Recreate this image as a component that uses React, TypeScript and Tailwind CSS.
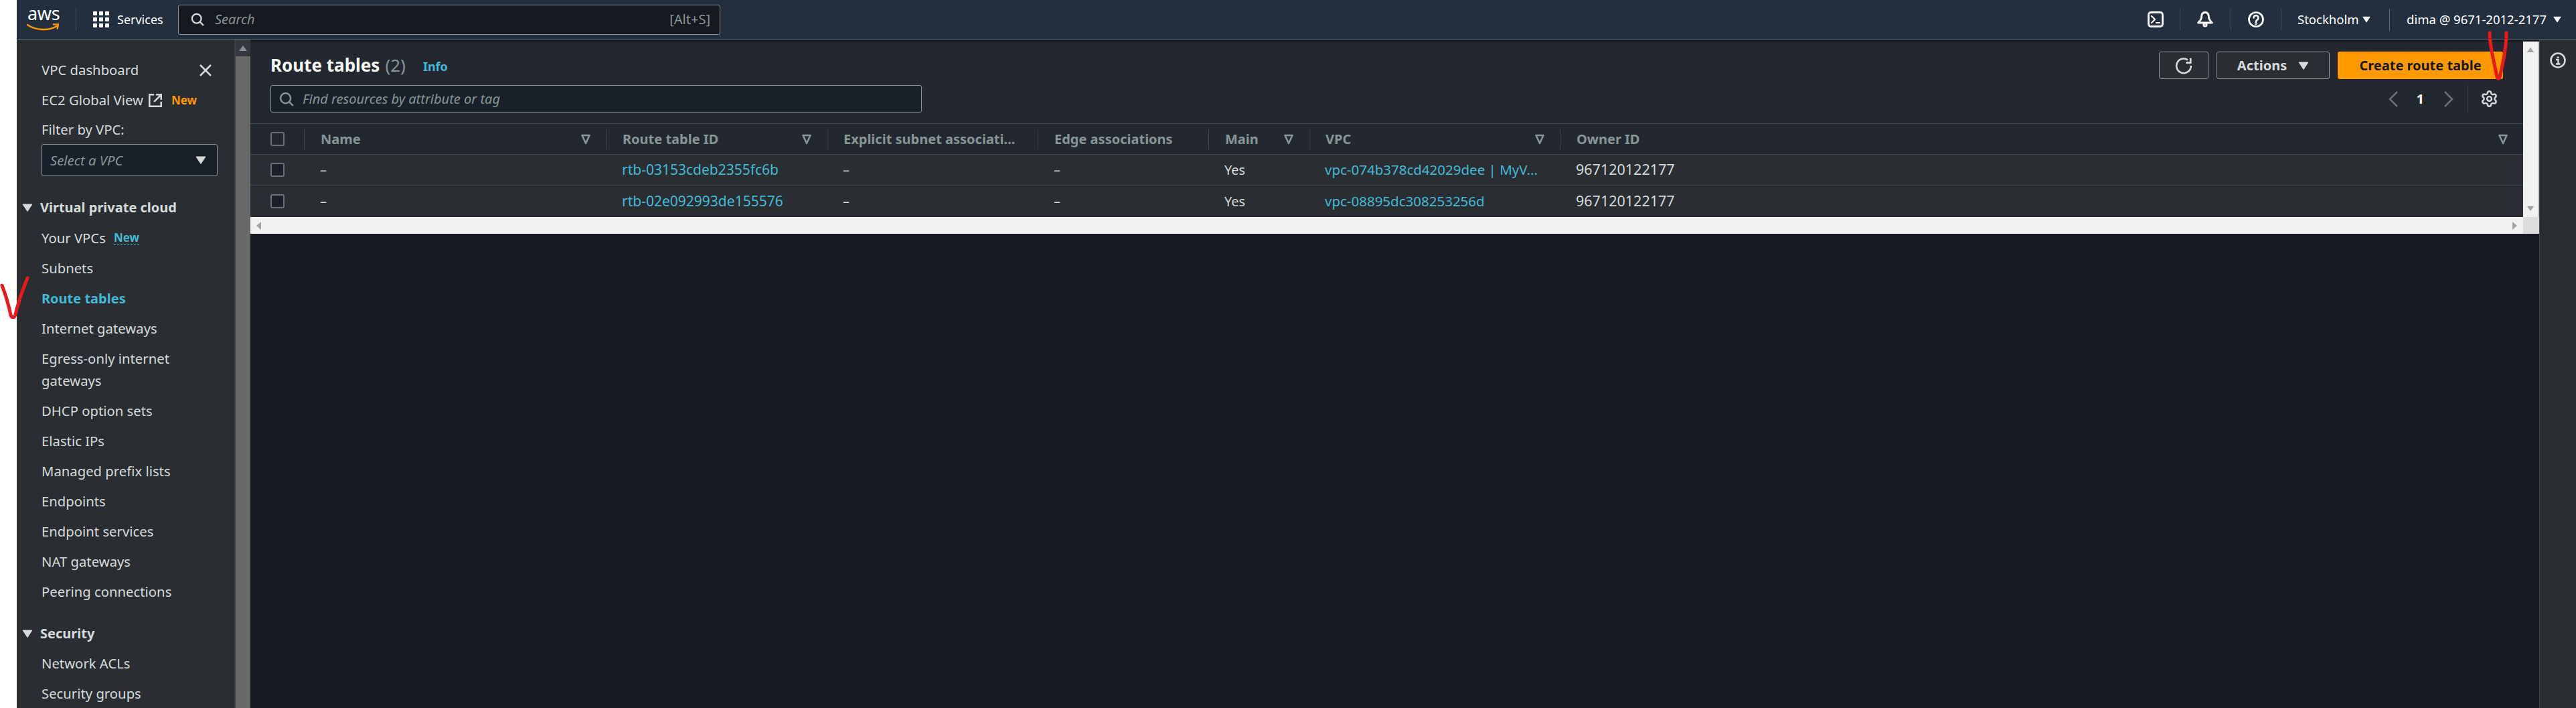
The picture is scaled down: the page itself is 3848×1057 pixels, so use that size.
import { Settings } from "lucide-react";

const font = "font-['Noto_Sans','Open_Sans',sans-serif]";

function Tri({ className }: { className: string }) {
  return (
    <svg viewBox="0 0 16 12" className={className}>
      <path d="M1 1h14L8 11.5z" fill="currentColor" stroke="currentColor" strokeLinejoin="round" />
    </svg>
  );
}

function FilterIcon() {
  return (
    <svg viewBox="0 0 14 16" className="h-[16px] w-[14px] shrink-0 text-[#879596]">
      <path d="M1.5 2h11L7 14z" fill="none" stroke="currentColor" strokeWidth="2.6" strokeLinejoin="round" />
    </svg>
  );
}

function SearchIcon({ className }: { className: string }) {
  return (
    <svg viewBox="0 0 24 24" className={className} fill="none" stroke="currentColor" strokeWidth="2.7" strokeLinecap="round">
      <circle cx="10.5" cy="10.5" r="8.2" />
      <path d="M16.5 16.5 22 22" />
    </svg>
  );
}

function NavItem({ label, active, badge }: { label: string; active?: boolean; badge?: boolean }) {
  return (
    <div className={`flex h-[45px] items-center ${active ? "text-[20px] font-bold text-[#44b9d6]" : "text-[#d5dbdb]"}`}>
      <span>{label}</span>
      {badge && (
        <span className="ml-[12px] border-b border-dashed border-[#44b9d6] text-[17px] leading-[20px] font-bold text-[#44b9d6]">
          New
        </span>
      )}
    </div>
  );
}

function Section({ label, className }: { label: string; className: string }) {
  return (
    <div className={`-ml-[29px] flex h-[45px] items-center gap-[11px] text-[20px] font-bold text-[#d5dbdb] ${className}`}>
      <Tri className="h-[12px] w-[16px] shrink-0" />
      <span>{label}</span>
    </div>
  );
}

const cols = "grid grid-cols-[80px_451px_330px_315px_255px_150px_375px_1fr]";

function Head({ label, filter = true }: { label: string; filter?: boolean }) {
  return (
    <div className="flex items-center">
      <div className="flex h-[30px] flex-1 items-center justify-between border-l border-[#414750] pr-[23px] pl-[24px]">
        <span className="whitespace-nowrap">{label}</span>
        {filter && <FilterIcon />}
      </div>
    </div>
  );
}

function Row({ id, vpc, className }: { id: string; vpc: string; className: string }) {
  const cell = "flex items-center pl-[24px] whitespace-nowrap";
  return (
    <div className={`${cols} border-t border-[#414750] bg-[#2a2e33] text-[#d5dbdb] ${className}`}>
      <div className="flex items-center pl-[30px]">
        <div className="h-[21px] w-[21px] rounded-[3px] border-2 border-[#687078] bg-[#1a2029]" />
      </div>
      <div className={cell}>–</div>
      <div className={`${cell} text-[21px] text-[#44b9d6]`}>{id}</div>
      <div className={cell}>–</div>
      <div className={cell}>–</div>
      <div className={cell}>Yes</div>
      <div className={`${cell} text-[20.500px] text-[#44b9d6]`}>{vpc}</div>
      <div className={`${cell} text-[21.500px]`}>967120122177</div>
    </div>
  );
}

export default function App() {
  return (
    <div className={`flex h-[1057px] w-[3848px] overflow-hidden bg-white text-[20px] ${font}`}>
      <div className="w-[25px] shrink-0 bg-white" />
      <div className="flex min-w-0 flex-1 flex-col">
        <header className="flex h-[59px] shrink-0 items-center border-b border-[#5f6b7a] bg-[#232f3e] text-[18.500px] text-white">
          <div className="relative ml-[15px] flex h-[44px] w-[58px] flex-col items-start">
            <span className="-mt-[5px] ml-[1px] text-[27px] leading-[36px] tracking-[-0.3px]">aws</span>
            <svg viewBox="0 0 48 12" className="-mt-[3px] h-[12px] w-[48px]">
              <path d="M1 2c13 9 32 9 44 2" fill="none" stroke="#ff9900" strokeWidth="2.6" strokeLinecap="round" />
              <path d="M39 1.5h8l-1.5 7" fill="none" stroke="#ff9900" strokeWidth="2.4" />
            </svg>
          </div>
          <div className="ml-[15px] h-[33px] w-px bg-[#414d5c]" />
          <svg viewBox="0 0 24 24" className="ml-[25px] h-[24px] w-[24px] text-white" fill="currentColor">
            <rect x="0" y="0" width="6" height="6" rx="1" />
            <rect x="9" y="0" width="6" height="6" rx="1" />
            <rect x="18" y="0" width="6" height="6" rx="1" />
            <rect x="0" y="9" width="6" height="6" rx="1" />
            <rect x="9" y="9" width="6" height="6" rx="1" />
            <rect x="18" y="9" width="6" height="6" rx="1" />
            <rect x="0" y="18" width="6" height="6" rx="1" />
            <rect x="9" y="18" width="6" height="6" rx="1" />
            <rect x="18" y="18" width="6" height="6" rx="1" />
          </svg>
          <span className="ml-[12px] w-[91px] text-[18px]">Services</span>
          <div className="flex h-[45px] w-[810px] items-center rounded-[3px] border border-[#879596] bg-[#16191f] pr-[14px] pl-[18px] text-[20px]">
            <SearchIcon className="h-[20px] w-[20px] text-[#d5dbdb]" />
            <span className="ml-[16px] text-[#879596] italic">Search</span>
            <span className="ml-auto text-[#879596]">[Alt+S]</span>
          </div>
          <div className="ml-auto flex h-full items-center">
            <svg viewBox="0 0 24 24" className="h-[24px] w-[24px]" fill="none" stroke="currentColor" strokeWidth="2.8" strokeLinecap="round" strokeLinejoin="round">
              <rect x="1.5" y="1.5" width="21" height="21" rx="3.5" />
              <path d="M6 7l5 5-5 5M13 17h5" strokeWidth="2.2" />
            </svg>
            <div className="ml-[24px] h-[33px] w-px bg-[#414d5c]" />
            <svg viewBox="0 0 24 24" className="ml-[25px] h-[24px] w-[24px]" fill="none" stroke="currentColor" strokeWidth="2.8" strokeLinejoin="round">
              <path d="M12 1.500C8 1.500 6.500 5 6.500 9c0 3-2.500 5.500-5 8h21c-2.500-2.500-5-5-5-8 0-4-1.500-7.500-5.500-7.500z" />
              <circle cx="12" cy="20" r="2.200" />
            </svg>
            <div className="ml-[26px] h-[33px] w-px bg-[#414d5c]" />
            <svg viewBox="0 0 24 24" className="ml-[25px] h-[24px] w-[24px]" fill="none" stroke="currentColor" strokeWidth="2.700" strokeLinecap="round">
              <circle cx="12" cy="12" r="10.500" />
              <path d="M8.500 9.500a3.500 3.500 0 1 1 5.500 2.900c-1.300.9-2 1.500-2 2.800" />
              <circle cx="12" cy="18" r=".6" />
            </svg>
            <div className="ml-[25px] h-[33px] w-px bg-[#414d5c]" />
            <span className="ml-[24px] w-[89px] whitespace-nowrap">Stockholm</span>
            <Tri className="ml-[8px] h-[10px] w-[12px]" />
            <div className="ml-[28px] h-[33px] w-px bg-[#5f6b7a]" />
            <span className="ml-[25px] w-[210px] whitespace-nowrap">dima @ 9671-2012-2177</span>
            <Tri className="ml-[9px] mr-[22px] h-[10px] w-[12px]" />
          </div>
        </header>

        <div className="flex min-h-0 flex-1">
          <nav className="w-[325px] shrink-0 overflow-hidden bg-[#2a2e33] pt-[23px] pl-[37px] text-[20.300px] leading-[33px] text-[#d5dbdb]">
            <div className="flex h-[45px] items-center justify-between pr-[34px]">
              <span>VPC dashboard</span>
              <svg viewBox="0 0 18 18" className="h-[18px] w-[18px]" fill="none" stroke="currentColor" strokeWidth="2.500">
                <path d="M1 1l16 16M17 1L1 17" />
              </svg>
            </div>
            <div className="flex h-[45px] items-center">
              <span>EC2 Global View</span>
              <svg viewBox="0 0 24 24" className="ml-[7px] h-[22px] w-[22px]" fill="none" stroke="currentColor" strokeWidth="2.800">
                <path d="M10 2.500H2.500v19h19V14M13 2.500h8.500V11M21.500 2.500 10 14" />
              </svg>
              <span className="ml-[13px] text-[17px] font-bold text-[#ff9900]">New</span>
            </div>
            <div className="flex h-[43px] items-center">Filter by VPC:</div>
            <div className="mr-[25px] flex h-[48px] items-center justify-between rounded-[3px] border border-[#879596] bg-[#1a2029] pr-[16px] pl-[12px]">
              <span className="text-[#879596] italic">Select a VPC</span>
              <Tri className="h-[12px] w-[16px]" />
            </div>
            <Section label="Virtual private cloud" className="mt-[24px]" />
            <div className="h-[1px]" />
            <NavItem label="Your VPCs" badge />
            <NavItem label="Subnets" />
            <NavItem label="Route tables" active />
            <NavItem label="Internet gateways" />
            <div className="py-[6px]">Egress-only internet<br />gateways</div>
            <NavItem label="DHCP option sets" />
            <NavItem label="Elastic IPs" />
            <NavItem label="Managed prefix lists" />
            <NavItem label="Endpoints" />
            <NavItem label="Endpoint services" />
            <NavItem label="NAT gateways" />
            <NavItem label="Peering connections" />
            <Section label="Security" className="mt-[17px]" />
            <NavItem label="Network ACLs" />
            <NavItem label="Security groups" />
          </nav>

          <div className="flex w-[24px] shrink-0 flex-col border-l-2 border-[#3e4044] bg-[#686868]">
            <div className="flex h-[25px] items-center justify-center bg-[#34373b]">
              <svg viewBox="0 0 12 8" className="h-[8px] w-[12px] text-[#8a8d90]"><path d="M6 0l6 8H0z" fill="currentColor" /></svg>
            </div>
          </div>

          <main className="flex min-w-0 flex-1 flex-col bg-[#16191f] pt-[3px]">
            <div className="flex">
              <div className="min-w-0 flex-1">
                <div className="h-[122px] bg-[#232830] pr-[30px] pl-[30px]">
                  <div className="flex h-[56px] items-end">
                    <div className="flex h-[41px] items-center">
                      <span className="text-[26px] font-bold text-[#fafafa]">Route tables</span>
                      <span className="ml-[8px] text-[26px] text-[#879596]">(2)</span>
                      <span className="mt-[3px] ml-[26px] text-[18px] font-bold text-[#44b9d6]">Info</span>
                    </div>
                    <div className="ml-auto flex h-[41px] items-stretch gap-[12px] font-bold text-[#d5dbdb]">
                      <div className="flex w-[74px] items-center justify-center rounded-[3px] border border-[#879596] bg-[#2a2e33]">
                        <svg viewBox="0 0 24 24" className="h-[26px] w-[26px]" fill="none" stroke="currentColor" strokeWidth="2.500">
                          <path d="M17.500 4A10 10 0 1 0 22 12" />
                          <path d="M21.500 1.500V8H15" />
                        </svg>
                      </div>
                      <div className="flex w-[169px] items-center justify-center gap-[17px] rounded-[3px] border border-[#879596] bg-[#2a2e33]">
                        <span>Actions</span>
                        <Tri className="h-[12px] w-[16px]" />
                      </div>
                      <div className="flex w-[247px] items-center justify-center rounded-[3px] bg-[#ff9900] text-[#16191f]">
                        Create route table
                      </div>
                    </div>
                  </div>
                  <div className="mt-[9px] flex h-[41px] items-center">
                    <div className="flex h-[41px] w-[973px] items-center rounded-[3px] border border-[#879596] bg-[#1a2029] pl-[12px]">
                      <SearchIcon className="h-[22px] w-[22px] text-[#879596]" />
                      <span className="ml-[13px] text-[#879596] italic">Find resources by attribute or tag</span>
                    </div>
                    <div className="ml-auto flex h-full items-center pr-[7px]">
                      <svg viewBox="0 0 14 24" className="h-[24px] w-[14px]" fill="none" stroke="#687078" strokeWidth="2.500"><path d="M13 1 2 12l11 11" /></svg>
                      <span className="ml-[28px] font-bold text-[#fafafa]">1</span>
                      <svg viewBox="0 0 14 24" className="ml-[30px] h-[24px] w-[14px]" fill="none" stroke="#687078" strokeWidth="2.500"><path d="M1 1l11 11L1 23" /></svg>
                      <div className="ml-[21px] h-[41px] w-px bg-[#414750]" />
                      <Settings className="ml-[18px] h-[27px] w-[27px] text-[#d5dbdb]" strokeWidth={2.2} />
                    </div>
                  </div>
                </div>

                <div className={`${cols} h-[46px] border-t border-[#414750] bg-[#232830] font-bold text-[#879596]`}>
                  <div className="flex items-center pl-[30px]">
                    <div className="h-[21px] w-[21px] rounded-[3px] border-2 border-[#687078] bg-[#232830]" />
                  </div>
                  <Head label="Name" />
                  <Head label="Route table ID" />
                  <Head label="Explicit subnet associati..." filter={false} />
                  <Head label="Edge associations" filter={false} />
                  <Head label="Main" />
                  <Head label="VPC" />
                  <div className="flex items-center">
                    <div className="flex h-[30px] flex-1 items-center justify-between border-l border-[#414750] pr-[23px] pl-[24px]">
                      <span>Owner ID</span>
                      <FilterIcon />
                    </div>
                  </div>
                </div>
                <Row id="rtb-03153cdeb2355fc6b" vpc="vpc-074b378cd42029dee | MyV..." className="h-[46px]" />
                <Row id="rtb-02e092993de155576" vpc="vpc-08895dc308253256d" className="h-[48px]" />
              </div>
              <div className="flex w-[24px] shrink-0 flex-col items-center justify-between border-r-2 border-[#c8c8c8] bg-[#f1f1f1] py-[9px]">
                <svg viewBox="0 0 12 8" className="h-[7px] w-[12px] text-[#a3a3a3]"><path d="M6 0l6 8H0z" fill="currentColor" /></svg>
                <svg viewBox="0 0 12 8" className="h-[7px] w-[12px] text-[#a3a3a3]"><path d="M0 0h12L6 8z" fill="currentColor" /></svg>
              </div>
            </div>
            <div className="flex h-[25px]">
              <div className="flex flex-1 items-center justify-between bg-[#f1f1f1] pr-[9px] pl-[9px]">
                <svg viewBox="0 0 7 12" className="h-[12px] w-[7px] text-[#a3a3a3]"><path d="M7 0v12L0 6z" fill="currentColor" /></svg>
                <svg viewBox="0 0 7 12" className="h-[12px] w-[7px] text-[#a3a3a3]"><path d="M0 0v12l7-6z" fill="currentColor" /></svg>
              </div>
              <div className="w-[24px] bg-[#dcdcdc]" />
            </div>
          </main>

          <aside className="flex w-[55px] shrink-0 justify-center border-l border-[#3f4347] bg-[#2a2e33] pt-[19px]">
            <svg viewBox="0 0 24 24" className="h-[24px] w-[24px] text-[#d5dbdb]" fill="none" stroke="currentColor" strokeWidth="2.600">
              <circle cx="12" cy="12" r="10.500" />
              <path d="M9 11h3.500v6M9 17.500h6.500" strokeWidth="2.400" />
              <path d="M12 6.500v2.500" strokeWidth="3" />
            </svg>
          </aside>
        </div>
      </div>

      <svg viewBox="0 0 44 80" className="absolute top-[412px] left-0 h-[80px] w-[44px]" fill="none" stroke="#e8191a" strokeWidth="5" strokeLinecap="round" strokeLinejoin="round">
        <path d="M3 14c5 13 10 30 13 44 1 5 5 5 7 0 3-14 10-35 18-55" />
      </svg>
      <svg viewBox="0 0 40 76" className="absolute top-[46px] left-[3712px] h-[76px] w-[40px]" fill="none" stroke="#e8191a" strokeWidth="5" strokeLinecap="round" strokeLinejoin="round">
        <path d="M7 3c0 20 6 40 11 66 1 3 3 3 4 0 6-24 10-44 10-66" />
      </svg>
    </div>
  );
}
